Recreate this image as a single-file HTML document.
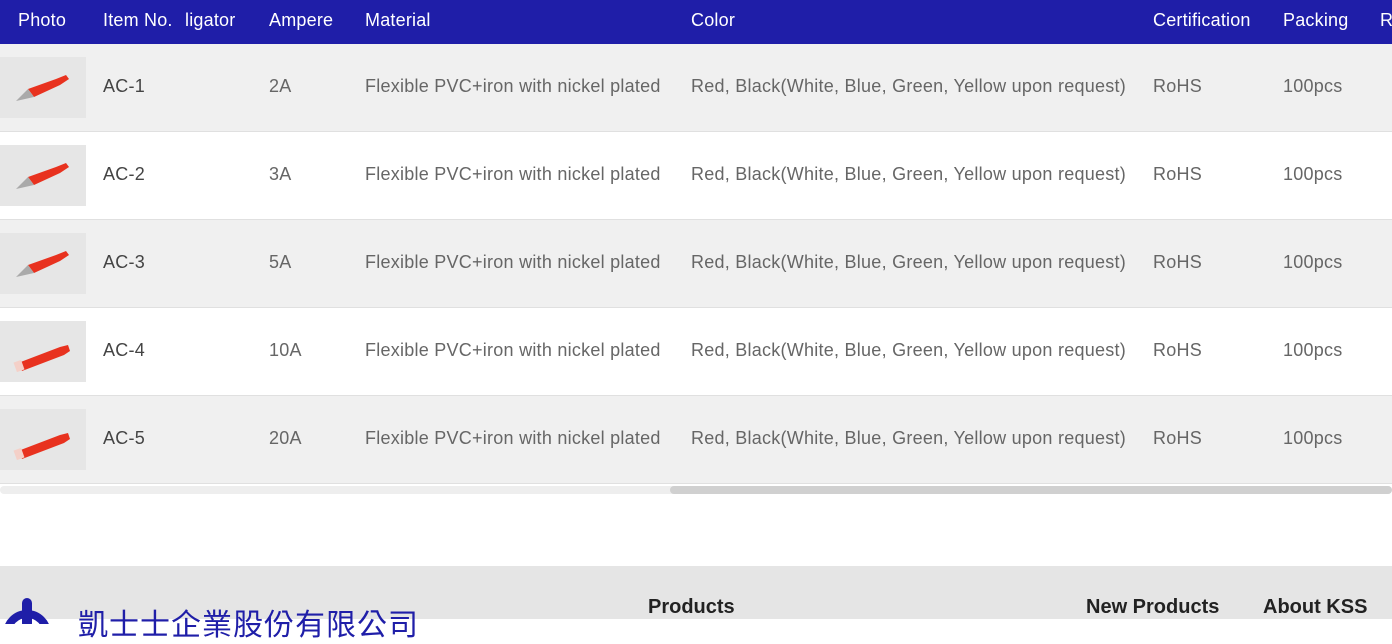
<!DOCTYPE html>
<html><head><meta charset="utf-8"><style>
body{margin:0;width:1392px;height:619px;overflow:hidden;background:#fff;font-family:"Liberation Sans","Noto Sans CJK TC",sans-serif;position:relative}
.hd{position:absolute;left:0;top:0;width:1392px;height:44px;background:#1f1ea8;color:#fff;font-size:18px;letter-spacing:0.2px}
.hd span,.row span{position:absolute;white-space:nowrap}
.hd span{top:10px}
.row{position:absolute;left:0;width:1392px;height:87px;border-bottom:1px solid #e0e0e0;color:#666;font-size:18px;letter-spacing:0.25px}
.row span{top:32px}
.row .it{color:#444}
.ph{position:absolute;left:0;top:13px;width:86px;height:61px;background:#e6e6e6}
.foot{position:absolute;left:0;top:566px;width:1392px;height:53px;background:#e5e5e5}
.foot span{position:absolute;top:30px;font-size:20px;color:#222;font-weight:bold}
</style></head><body>
<div class="hd"><span style="left:18px">Photo</span><span style="left:103px">Item No.</span><span style="left:185px">ligator</span><span style="left:269px">Ampere</span><span style="left:365px">Material</span><span style="left:691px">Color</span><span style="left:1153px">Certification</span><span style="left:1283px">Packing</span><span style="left:1380px">R</span></div>

<div id="rows"></div>
<script>
var a=['2A','3A','5A','10A','20A'];
var h='';
for(var i=0;i<5;i++){
var big=i>=3;
var clip=big?'<svg width="86" height="61"><path d="M18 42 L60 26 L68 24 L70 30 L64 34 L22 50 Z" fill="#e8321f"/><rect x="15" y="40" width="8" height="10" fill="#f4d0c8" transform="rotate(-20 19 45)"/></svg>'
:'<svg width="86" height="61"><path d="M28 32 L56 22 L66 18 L69 22 L60 28 L34 40 Z" fill="#e8321f"/><path d="M16 44 L28 32 L34 40 Z" fill="#aaa"/></svg>';
h+='<div class="row" style="top:'+(44+i*88)+'px;background:'+(i%2?'#fff':'#f0f0f0')+'"><div class="ph">'+clip+'</div><span class="it" style="left:103px">AC-'+(i+1)+'</span><span style="left:269px">'+a[i]+'</span><span style="left:365px">Flexible PVC+iron with nickel plated</span><span style="left:691px">Red, Black(White, Blue, Green, Yellow upon request)</span><span style="left:1153px">RoHS</span><span style="left:1283px">100pcs</span></div>';
}
document.getElementById('rows').innerHTML=h;
</script>
<div style="position:absolute;left:0;top:486px;width:1392px;height:8px;background:#eee;border-radius:4px"></div>
<div style="position:absolute;left:670px;top:486px;width:722px;height:8px;background:#d0d0d0;border-radius:4px"></div>
<div class="foot">
<svg style="position:absolute;left:0;top:28px" width="56" height="30"><circle cx="27" cy="40" r="20" fill="none" stroke="#1f1ea8" stroke-width="8"/><rect x="22" y="4" width="10" height="30" rx="5" fill="#1f1ea8"/></svg>
<span style="left:78px;color:#1f1ea8;font-size:30px;top:34px;letter-spacing:1px;font-weight:normal">凱士士企業股份有限公司</span>
<span style="left:648px">Products</span><span style="left:1086px">New Products</span><span style="left:1263px">About KSS</span>
</div>
</body></html>
